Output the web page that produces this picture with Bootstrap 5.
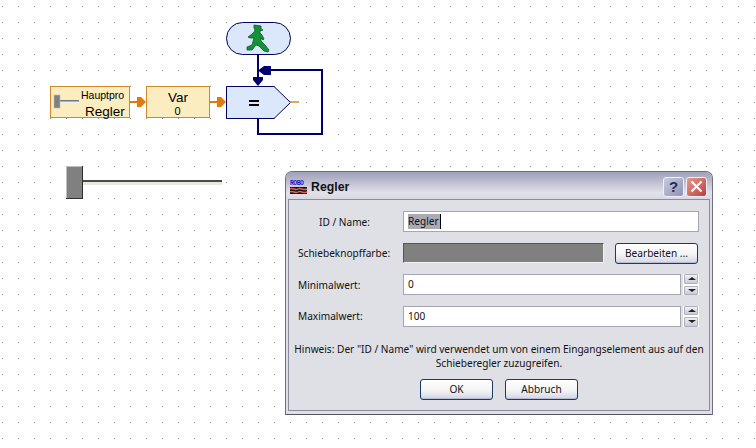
<!DOCTYPE html>
<html lang="de">
<head>
<meta charset="utf-8">
<title>Regler</title>
<link href="https://cdn.jsdelivr.net/npm/bootstrap@5.3.0/dist/css/bootstrap.min.css" rel="stylesheet">
<script src="https://cdn.jsdelivr.net/npm/bootstrap@5.3.0/dist/js/bootstrap.bundle.min.js"></script>
<style>
html,body{margin:0;height:448px;overflow:hidden;background:#fff}
.sheet{position:relative;width:756px;height:448px;overflow:hidden;background:#fff;font-family:"Noto Sans","DejaVu Sans",sans-serif}
.diagram{position:absolute;left:0;top:0}
.diagram text{font-family:"Liberation Sans",sans-serif;fill:#000}
.dlg{position:absolute;left:285px;top:171px;width:428px;height:244px;background:#dfdfe6;border:1px solid #6e6e80;border-bottom-color:#55555f;border-radius:7px 7px 0 0;color:#111;font-size:10.1px;line-height:14px}
.dlg-title{height:27px;padding:2px 5px 0 4px;background:linear-gradient(#a0a0b8 0,#b8b8cc 30%,#e2e2ea 78%,#d8d8e2 100%);border-radius:6px 6px 0 0}
.dlg-title b{font-size:12.300px;font-weight:700;font-family:"Liberation Sans",sans-serif;margin-left:3px;color:#111}
.cap-btn{width:21px;height:20px;border-radius:3px;border:1px solid #eef;display:block}
.cap-help{background:linear-gradient(135deg,#c9cbe0,#8f92b3);color:#2b2b50;text-align:center;font:700 15px/18px "Liberation Sans",sans-serif}
.cap-x{background:linear-gradient(135deg,#e69a8c,#bd3e3c);margin-left:2px}
.dlg-body{margin:0 2px;height:212px;border:1px solid #8c8c9c;padding:11px 10px 0 9px;background:#dfdfe6;position:relative}
.dlg-row{height:21px;margin-bottom:10.5px;align-items:center;display:flex}
.lbl{width:105px;flex:none}
.lbl-in{padding-left:21px}
.dlg .fld{height:21px;border:1px solid #a6a6ae;border-radius:0;padding:0 0 0 4px;background:#fff;font-size:10.1px;color:#111;line-height:19px;box-shadow:none;min-height:0}
.sel{background:#a9aab6;display:inline-block;height:15px;line-height:15px;border-right:1px solid #000;padding-right:1px}
.swatch{width:201px;height:20px;flex:none;background:#808080;border:1px solid #555;border-right-color:#f2f2f2;border-bottom-color:#f2f2f2}
.dlg .wbtn{height:21px;border:1px solid #1d3a5f;border-radius:3px;background:linear-gradient(#fff 0,#f4f4f6 55%,#d2d4e2 100%);color:#111;font-size:10.1px;line-height:19px;padding:0;box-shadow:inset 0 -1px 0 #b7bcd4}
.edit-btn{width:83px;margin-left:11px}
.spin{width:16px;height:21px;margin-left:2px;flex:none;background:#fff;padding:0 1px;display:flex;flex-direction:column;justify-content:space-between}
.spin i{display:block;height:9.5px;background:linear-gradient(#f0f1f5,#c9cbd6);border:1px solid #b0b0bc;border-radius:1px;position:relative}
.spin i::after{content:"";position:absolute;left:3px;top:2px;border:4px solid transparent;border-top:0;border-bottom:3.5px solid #222}
.spin i.dn::after{border-top:3.5px solid #222;border-bottom:0;top:2px}
.hint{position:absolute;left:0;right:0;top:142px;text-align:center;line-height:14px;white-space:nowrap}
.actions{position:absolute;left:0;right:0;top:179px;display:flex;gap:12px;padding-left:131px}
.actions .wbtn{width:73px}
</style>
</head>
<body>
<div class="sheet">
<svg class="diagram" width="756" height="448" viewBox="0 0 756 448">
 <defs>
  <pattern id="grid" x="2" y="6" width="16" height="16" patternUnits="userSpaceOnUse"><rect width="1" height="1" fill="#8c8c8c"/></pattern>
 </defs>
 <rect width="756" height="448" fill="url(#grid)"/>
 <!-- wires -->
 <g fill="none" stroke="#000070" stroke-width="2">
  <path d="M258 54V80"/>
  <path d="M268 70H322V134H258V118"/>
 </g>
 <path d="M253 77H263V80L258 86L253 80Z" fill="#000070"/>
 <path d="M258 70.500L264 66H271V75H264Z" fill="#000070"/>
 <!-- start -->
 <rect x="226.500" y="22.500" width="64" height="32" rx="16" fill="#dbe8fb" stroke="#000060"/>
 <path d="M254 25L261 26L261 29L263 30L260 31L260 33L262 35L264 39L263 40L261 38L261 41L265 45L269 50L268 52L264 51L259 46L256 45L252 50L247 50L247 47L252 45L254 38L250 38L248 37L252 34L254 32L255 30L254 28Z" fill="#14923a" stroke="#0a5a25" stroke-width=".8"/>
 <!-- branch -->
 <path d="M226.500 86.500H274L290.500 102.500L274 118.500H226.500Z" fill="#dbe8fb" stroke="#000060"/>
 <rect x="249" y="100" width="10" height="2" fill="#000"/><rect x="249" y="104" width="10" height="2" fill="#000"/>
 <path d="M290 102H299" stroke="#d08a30" stroke-width="1.500"/>
 <!-- input blocks -->
 <rect x="50.500" y="86.500" width="79" height="31" fill="#fbedc0" stroke="#d0882a"/>
 <rect x="146.500" y="86.500" width="63" height="31" fill="#fbedc0" stroke="#d0882a"/>
 <rect x="60" y="100" width="19" height="1.500" fill="#777"/><rect x="60" y="102" width="19" height="1.500" fill="#eee"/>
 <rect x="54" y="95" width="6" height="13" fill="#808080" stroke="#bbb" stroke-width=".6"/>
 <text x="81" y="99" font-size="10.500">Hauptpro</text>
 <text x="85" y="116" font-size="13.500">Regler</text>
 <text x="178" y="102" font-size="13.500" text-anchor="middle">Var</text>
 <text x="177.500" y="115" font-size="11" text-anchor="middle">0</text>
 <!-- arrows -->
 <g stroke="#e07a10" stroke-width="2"><path d="M130 102H138"/><path d="M210 102H218"/></g>
 <path d="M137 97H141L146 102L141 107H137Z" fill="#e07a10"/>
 <path d="M217 97H221L226 102L221 107H217Z" fill="#e07a10"/>
 <!-- large slider -->
 <rect x="83" y="180" width="139" height="2" fill="#4a4a48"/>
 <rect x="83" y="182" width="139" height="3" fill="#e8e8e2"/>
 <rect x="66" y="166" width="17" height="33" fill="#2f2f2f"/>
 <rect x="66" y="166" width="16" height="32" fill="#c0c0c0"/>
 <rect x="67" y="167" width="15" height="31" fill="#808080"/>
</svg>
<div class="dlg">
 <div class="dlg-title d-flex align-items-center">
  <svg width="18" height="16" viewBox="0 0 18 16">
   <text x="0" y="6" font-size="6.500" font-family="Liberation Mono" font-weight="700" fill="#1a1ac8" textLength="14">ROBO</text>
   <rect x="0" y="8" width="17" height="7" fill="#111"/>
   <path d="M0 10c3-2 5 2 8 0s5 2 9 0M0 13c3-2 5 2 8 0s5 2 9 0" stroke="#e0645a" stroke-width="1.500" fill="none"/>
  </svg>
  <b>Regler</b>
  <span class="ms-auto cap-btn cap-help">?</span>
  <span class="cap-btn cap-x d-flex align-items-center justify-content-center">
   <svg width="13" height="13" viewBox="0 0 13 13"><path d="M1.500 1.500L11.500 11.500M11.500 1.500L1.500 11.500" stroke="#fff" stroke-width="2.200"/></svg>
  </span>
 </div>
 <div class="dlg-body">
  <div class="dlg-row"><span class="lbl lbl-in">ID / Name:</span><div class="form-control fld flex-grow-1"><span class="sel">Regler</span></div></div>
  <div class="dlg-row"><span class="lbl">Schiebeknopffarbe:</span><span class="swatch"></span><button type="button" class="btn wbtn edit-btn">Bearbeiten ...</button></div>
  <div class="dlg-row"><span class="lbl">Minimalwert:</span><div class="form-control fld flex-grow-1">0</div><span class="spin"><i></i><i class="dn"></i></span></div>
  <div class="dlg-row"><span class="lbl">Maximalwert:</span><div class="form-control fld flex-grow-1">100</div><span class="spin"><i></i><i class="dn"></i></span></div>
  <div class="hint">Hinweis: Der "ID / Name" wird verwendet um von einem Eingangselement aus auf den<br>Schieberegler zuzugreifen.</div>
  <div class="actions"><button type="button" class="btn wbtn">OK</button><button type="button" class="btn wbtn">Abbruch</button></div>
 </div>
</div>
</div>
</body>
</html>
